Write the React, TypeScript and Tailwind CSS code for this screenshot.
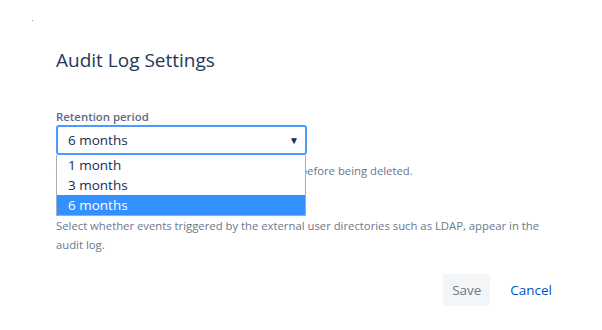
import React from "react";

export default function App() {
  return (
    <div
      className="relative w-[602px] h-[330px] bg-white overflow-hidden"
      style={{ fontFamily: '"Open Sans", "Noto Sans", sans-serif' }}
    >
      <div className="absolute left-[32px] top-[20px] w-[1px] h-[1px] bg-[#9aa0a6]" />
      <div className="pl-[56px] pr-[40px] pt-[47px]">
        <h1 className="text-[19px] leading-[26px] text-[#253858] font-normal">Audit Log Settings</h1>
        <div className="mt-[36px]">
          <label className="block text-[11.4px] leading-[16px] font-semibold text-[#5e6c84]">Retention period</label>
          <div className="relative w-[251px]">
            <div className="flex items-center justify-between h-[30px] border-2 border-[#4c9aff] rounded-[3px] pl-[10px] pr-[6px] bg-white">
              <span className="text-[13.5px] text-[#172b4d]">6 months</span>
              <span className="text-[10px] leading-[10px] text-[#172b4d]">▼</span>
            </div>
            <div className="absolute left-[0px] top-[30px] w-[250px] bg-white border border-[#a5adba] border-t-0">
              <div className="h-[20px] leading-[20px] pl-[11px] text-[13.5px] text-[#172b4d]">1 month</div>
              <div className="h-[20px] leading-[20px] pl-[11px] text-[13.5px] text-[#172b4d]">3 months</div>
              <div className="h-[20px] leading-[20px] pl-[11px] text-[13.5px] text-white bg-[#3390ff]">6 months</div>
            </div>
          </div>
          <p className="mt-[6px] text-[11.3px] leading-[20px] text-[#6b778c]">
            Audit log events will be kept for the set period before being deleted.
          </p>
          <p className="mt-[35px] text-[11.3px] leading-[19px] text-[#6b778c]">
            Select whether events triggered by the external user directories such as LDAP, appear in the audit log.
          </p>
        </div>
        <div className="mt-[20px] flex justify-end items-center gap-[10px]">
          <button className="h-[32px] w-[47px] rounded-[3px] bg-[#f4f5f7] text-[13.5px] text-[#6b778c]">Save</button>
          <button className="h-[32px] px-[10px] text-[13.5px] text-[#0052cc]">Cancel</button>
        </div>
      </div>
    </div>
  );
}
